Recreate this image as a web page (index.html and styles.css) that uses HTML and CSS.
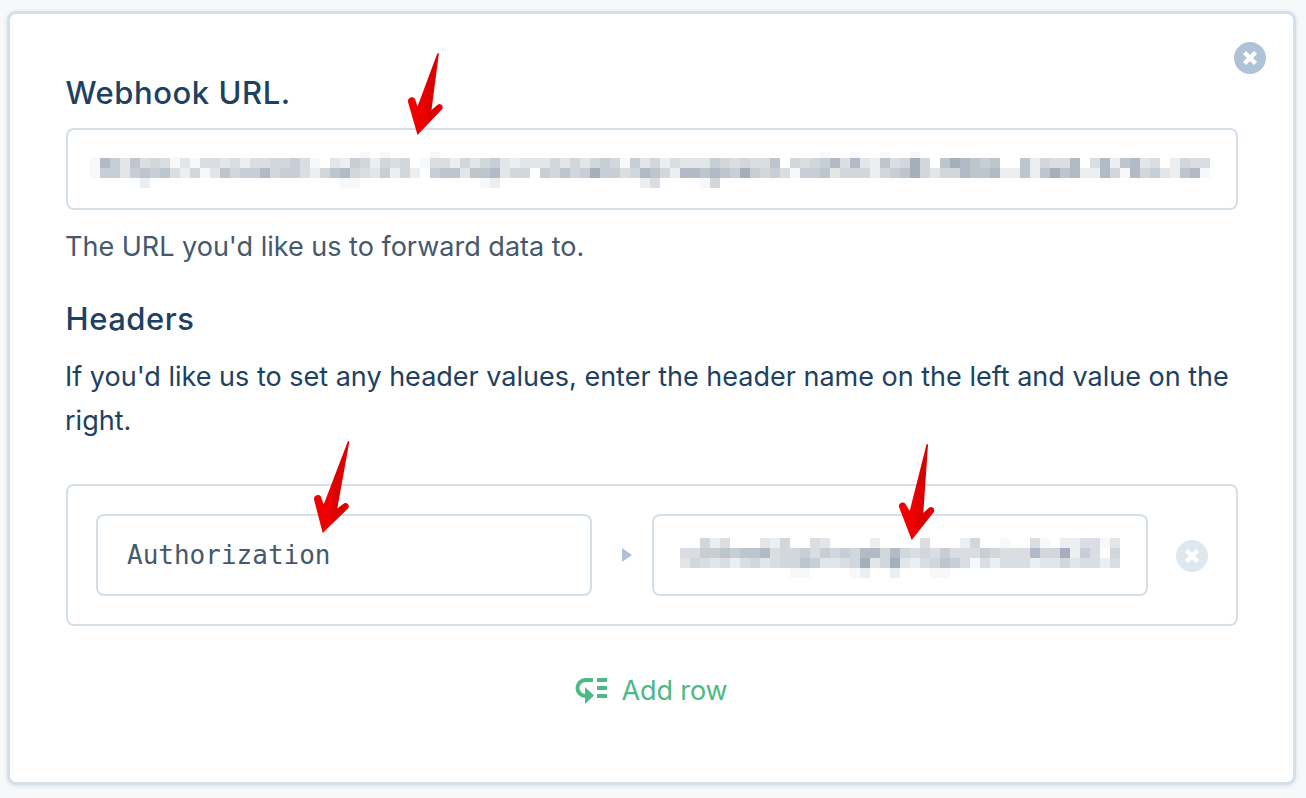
FILE: index.html
```
<!DOCTYPE html>
<html lang="en">
<head>
<meta charset="utf-8">
<title>Webhook</title>
<link rel="stylesheet" href="styles.css">
</head>
<body>
<main class="card">
  <button class="round-button close" aria-label="Close">
    <svg viewBox="0 0 32 32"><circle cx="16" cy="16" r="16"/><path d="M10.500 10.500 21.500 21.500M21.500 10.500 10.500 21.500"/></svg>
  </button>
  <h2 class="title"><span>Webhook URL.</span></h2>
  <div class="field url-field"><svg class="mosaic" id="url-value" width="1120" height="40"></svg></div>
  <p class="hint"><span>The URL you'd like us to forward data to.</span></p>
  <h2 class="title headers-title"><span>Headers</span></h2>
  <p class="description"><span>If you'd like us to set any header values, enter the header name on the left and value on the right.</span></p>
  <section class="header-row">
    <div class="field name-field"><span>Authorization</span></div>
    <svg class="separator" viewBox="0 0 12 14"><path d="M1 0 11 7 1 14Z"/></svg>
    <div class="field value-field"><svg class="mosaic" id="header-value" width="440" height="40"></svg></div>
    <button class="round-button remove" aria-label="Remove row">
      <svg viewBox="0 0 32 32"><circle cx="16" cy="16" r="16"/><path d="M10.500 10.500 21.500 21.500M21.500 10.500 10.500 21.500"/></svg>
    </button>
  </section>
  <button class="add-row">
    <svg viewBox="0 0 34 28"><path class="stroke" d="M18 3H10.5A8 8 0 0 0 10.5 19H12"/><path d="M10 10 19 18.500 10 27Z"/><path d="M22 1H32V5H22ZM22 9H32V13H22ZM22 17H32V21H22Z"/></svg>
    <span>Add row</span>
  </button>
</main>
<svg class="annotations" viewBox="0 0 1306 798">
  <defs><linearGradient id="red"><stop offset="0" stop-color="#f20000"/><stop offset=".45" stop-color="#ec0000"/><stop offset=".65" stop-color="#d80000"/><stop offset="1" stop-color="#e60000"/></linearGradient></defs>
  <path d="M437.300 53.500Q438.500 52.300 438.800 54L431.500 110 437.700 104.700C440.500 102.500 444 106.500 442.300 109L417.500 135 408 102C407.300 97.500 413 95.500 415 99L417.500 106.500Z"/>
  <path d="M347.800 441.500Q349 440.300 349.300 442L337.300 508.500 344 503.500C347 501.500 350.500 506 348 508.500L322.700 533 314 499.500C313.500 495 319.500 493.500 321 497L323.700 504.500Z"/>
  <path d="M926.500 444.500Q927.700 443.300 928 445L923.300 513 929 507.700C932 505.500 936 509.500 933.500 512.500L911.700 540 899 507C898.200 502.500 904 501 905.700 504.500L909.700 511Z"/>
</svg>
<script src="mosaic.js"></script>
</body>
</html>
```
FILE: styles.css
```
* { box-sizing: border-box; }
body {
  margin: 0;
  padding: 11px 10px 13px 7px;
  height: 798px;
  overflow: hidden;
  background: #f7f8fa;
  color: #1d4162;
  font: 27px/44px Inter, sans-serif;
}
h2, p { margin: 0; }
button { padding: 0; border: 0; background: none; font: inherit; }
svg { display: block; }
.card {
  position: relative;
  display: flex;
  flex-direction: column;
  height: 774px;
  padding: 57px 55px 0 56px;
  border: 3px solid #d5dfe8;
  border-radius: 9px;
  background: #fff;
  box-shadow: 0 1px 4px #d5dfe8;
}
.round-button { width: 32px; height: 32px; }
.round-button circle { fill: #b0c3d6; }
.round-button path { fill: none; stroke: #fff; stroke-width: 4.4; }
.close { position: absolute; top: 28px; right: 27px; }
.remove { margin: 2px 0 0 28px; }
.remove circle { fill: #dfe7ee; }
.title { height: 44px; margin-left: -0.5px; font-size: 31px; font-weight: 500; letter-spacing: 0.55px; white-space: nowrap; }
.field { border: 2px solid #d5dfe8; border-radius: 8px; background: #fff; }
.url-field { height: 82px; margin-top: 13px; padding: 18px 22px; }
.hint { margin: 15px 0 0 -1px; color: #46586c; white-space: nowrap; }
.headers-title { margin-top: 28px; }
.description { margin: 14px 0 0 -1px; }
.header-row {
  display: flex;
  align-items: center;
  height: 142px;
  margin-top: 41px;
  padding: 0 28px;
  border: 2px solid #d5dfe8;
  border-radius: 8px;
}
.name-field, .value-field { width: 496px; height: 82px; }
.name-field {
  display: flex;
  align-items: center;
  padding-left: 29px;
  color: #46586c;
  font: 26px/40px "DejaVu Sans Mono", monospace;
}
.value-field { padding: 22px 26px; }
.separator { width: 12px; height: 14px; margin: 0 19px 0 29px; fill: #b0c3d6; }
.add-row {
  display: flex;
  align-items: center;
  align-self: center;
  height: 44px;
  margin: 43px 1px 0 0;
  color: #4cb986;
}
.add-row svg { width: 34px; height: 28px; margin-right: 12px; fill: #4cb986; }
.add-row .stroke { fill: none; stroke: #4cb986; stroke-width: 4; }
.add-row span { letter-spacing: -0.1px; }
.annotations { position: absolute; inset: 0; width: 1306px; height: 798px; pointer-events: none; fill: url(#red); }
```
FILE: mosaic.js
```
// Redacted values: each digit is the darkness of one 10px block.
const shades = ['#fff', '#f6f8f9', '#eceff1', '#e2e6e9', '#dadee2', '#d2d7db', '#c8ced5', '#bdc5cd', '#b1bac5', '#a4afba'];
function drawMosaic(id, rows) {
  const svg = document.getElementById(id);
  rows.forEach((row, y) => [...row].forEach((level, x) => {
    if (level === '0') return;
    const block = document.createElementNS('http://www.w3.org/2000/svg', 'rect');
    const clipped = id === 'url-value' && y === 0 ? 4 : 0;
    block.setAttribute('x', x * 10);
    block.setAttribute('y', y * 10 + clipped);
    block.setAttribute('width', 10);
    block.setAttribute('height', 10 - clipped);
    block.setAttribute('fill', shades[level]);
    svg.append(block);
  }));
}
function sparse(length, blocks) {
  const row = Array(length).fill('0');
  Object.entries(blocks).forEach(([x, level]) => { row[x] = level; });
  return row.join('');
}
drawMosaic('url-value', [
  sparse(112, {27: 1, 29: 1, 34: 1, 73: 1, 76: 1, 79: 1, 82: 1}),
  '1863745413144342445564103265' + '2545014425356323335353565163' + '5243336545447054568483274595' + '0798767007254480482783402544',
  '166367674251375668566425785' + '4' + '3625206773778355065756966458' + '7528878769656416673555256795' + '3558778227279782285185632781',
  sparse(112, {5: 2, 25: 1, 26: 1, 39: 1, 40: 2, 55: 2, 56: 4, 61: 1, 62: 5})
]);
drawMosaic('header-value', [
  sparse(44, {2: 5, 3: 2, 4: 4, 8: 3, 9: 2, 10: 5, 13: 4, 14: 3, 19: 2, 24: 4, 28: 2, 29: 5, 32: 1, 35: 4, 36: 1, 38: 2, 39: 2, 40: 4, 41: 4, 42: 1, 43: 3}),
  '4466767784556465658858' + '5454644465444855926405',
  '3543424534557633459359' + '3245764142444233534424',
  sparse(44, {11: 1, 12: 1, 17: 1, 18: 2, 21: 2, 25: 1, 26: 1})
]);
```
